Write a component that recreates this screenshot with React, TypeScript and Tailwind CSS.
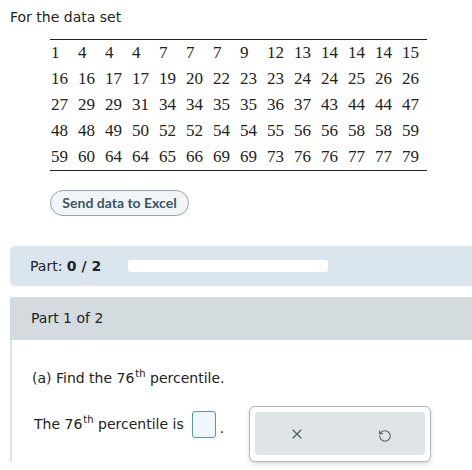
import { X, RotateCcw } from 'lucide-react'

const data = [
  [1, 4, 4, 4, 7, 7, 7, 9, 12, 13, 14, 14, 14, 15],
  [16, 16, 17, 17, 19, 20, 22, 23, 23, 24, 24, 25, 26, 26],
  [27, 29, 29, 31, 34, 34, 35, 35, 36, 37, 43, 44, 44, 47],
  [48, 48, 49, 50, 52, 52, 54, 54, 55, 56, 56, 58, 58, 59],
  [59, 60, 64, 64, 65, 66, 69, 69, 73, 76, 76, 77, 77, 79],
]

function Th() {
  return <sup className="relative -top-[6px] ml-[1px] text-[10px]">th</sup>
}

export default function App() {
  return (
    <div className="h-[470px] w-[472px] overflow-hidden bg-white font-['DejaVu_Sans',sans-serif] text-[14px] text-[#222]">
      <p className="pl-[10px] pt-[8px] leading-[18px]">For the data set</p>

      {/* data table */}
      <div className="ml-[50px] mt-[13px] w-[377px] border-y border-[#222] font-['Liberation_Serif',serif] text-[17px] text-[#222]">
        {data.map((row, i) => (
          <div key={i} className="grid h-[26px] grid-cols-[repeat(14,27px)] items-center pl-[1px]">
            {row.map((n, j) => (
              <span key={j}>{n}</span>
            ))}
          </div>
        ))}
      </div>

      <div className="ml-[50px] mt-[19px] flex h-[26px] w-[139px] items-center justify-center rounded-full border border-[#9aa4a9] bg-[#f1f5f7] font-['Lato',sans-serif] text-[14px] leading-none font-bold text-[#3b5663]">
        Send data to Excel
      </div>

      {/* progress */}
      <div className="ml-[10px] mt-[30px] flex h-[40px] items-center rounded-l-[5px] bg-[#dbe5ee] pl-[20px]">
        <span>
          Part: <b>0 / 2</b>
        </span>
        <div className="ml-[27px] h-[12px] w-[200px] rounded-[3px] bg-white" />
      </div>

      {/* part section */}
      <div className="ml-[10px] mt-[11px] border-l-2 border-[#dfe3e5]">
        <div className="-ml-[2px] flex h-[43px] items-center rounded-tl-[5px] bg-[#d4dbdf] pl-[21px]">
          Part 1 of 2
        </div>
        <p className="mt-[27px] pl-[20px] leading-[22px] text-[#222]">
          (a) Find the 76<Th /> percentile.
        </p>
        <div className="mt-[17px] flex items-start pl-[22px]">
          <div className="mt-[4px] flex items-center">
            <span>
              The 76<Th /> percentile is
            </span>
            <span className="ml-[8px] h-[27px] w-[24px] rounded-[3px] border border-[#5a9aa6] bg-[#eef6f8]" />
            <span className="ml-[4px] mt-[8px]">.</span>
          </div>
          <div className="ml-[25px] h-[56px] w-[182px] rounded-[6px] border border-[#aeb4b8] bg-white p-[5px] shadow-[0_2px_4px_rgba(0,0,0,0.15)]">
            <div className="flex h-[43px] items-center rounded-[3px] bg-[#dfe4e7] text-[#4b5b66]">
              <X className="ml-[34px]" size={16} strokeWidth={1.8} />
              <RotateCcw className="ml-[73px] mt-[4px]" size={14} strokeWidth={1.8} />
            </div>
          </div>
        </div>
      </div>
    </div>
  )
}
